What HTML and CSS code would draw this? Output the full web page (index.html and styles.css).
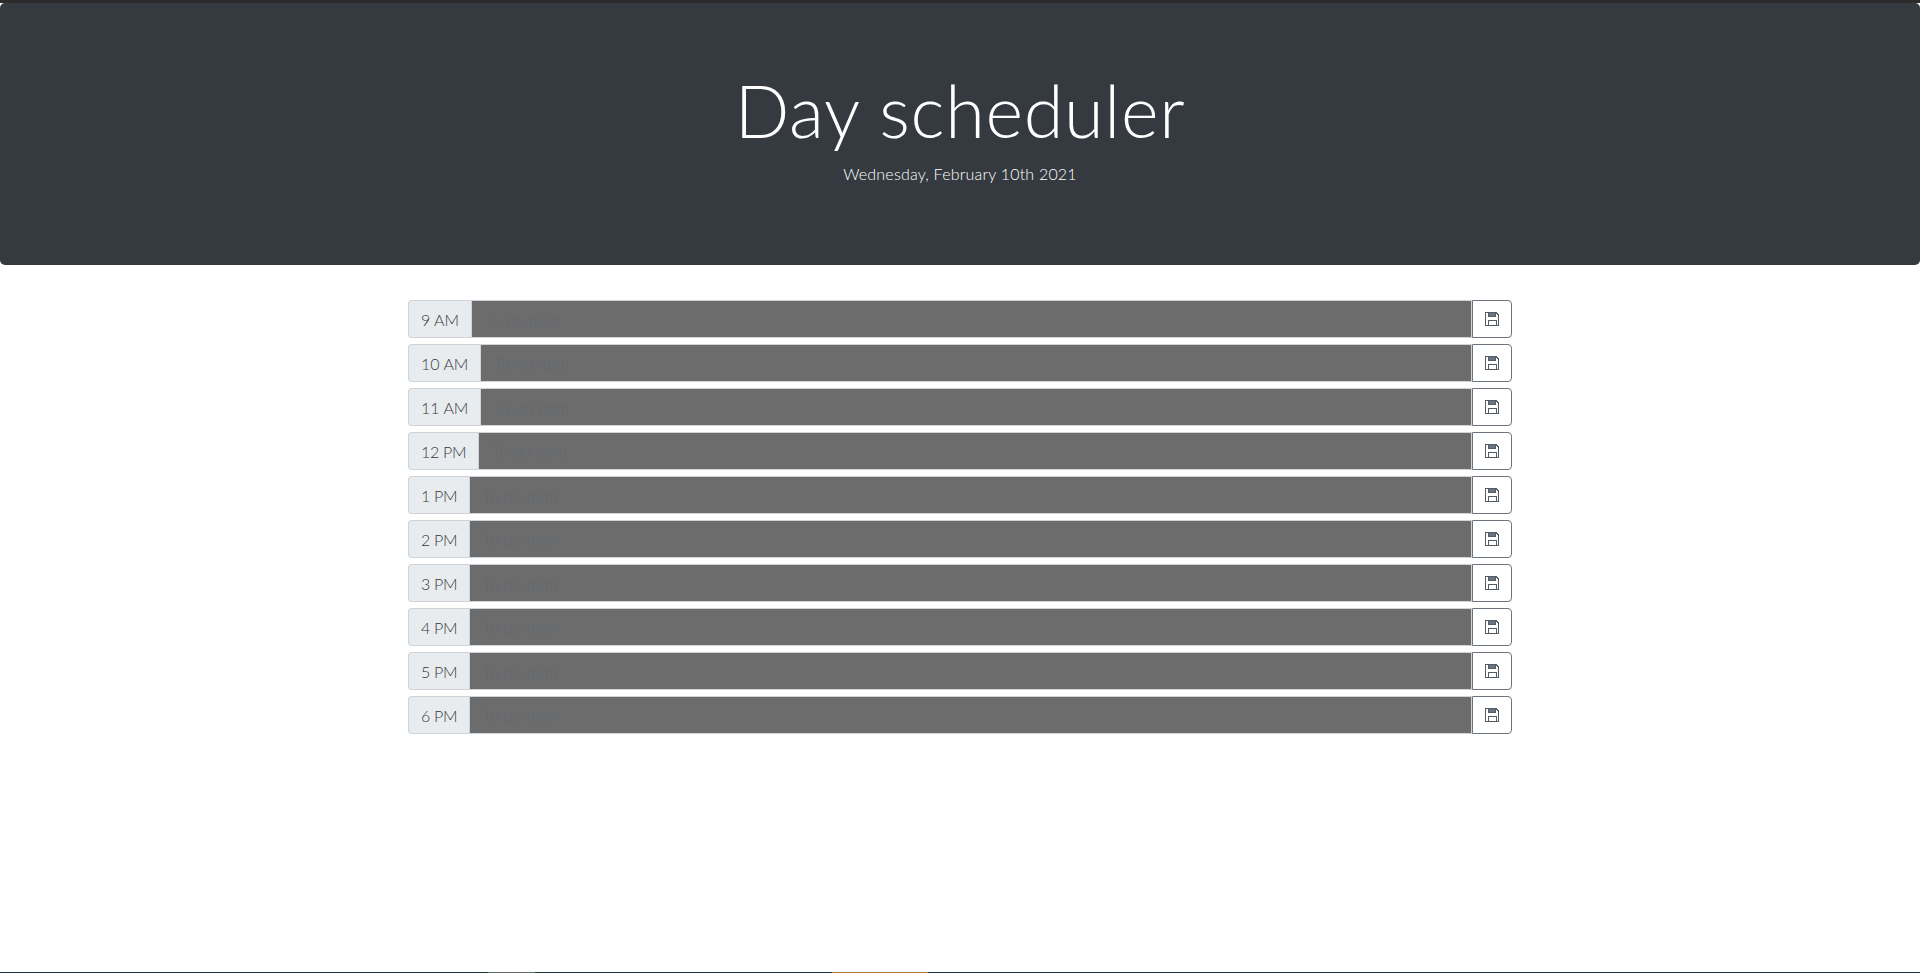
FILE: index.html
```html
<!DOCTYPE html>
<html>
<head>
    <title>Day scheduler</title>
    <link rel="stylesheet" href="styles.css">
</head>
<body>
    <div class="top-strip"></div>
    <header class="jumbotron">
        <h1 class="display">Day scheduler</h1>
        <p class="lead">Wednesday, February 10th 2021</p>
    </header>

    <div class="container">
        <div class="input-group">
            <span class="hour">9 AM</span>
            <input class="task" type="text" placeholder="To do item">
            <button class="save"><svg viewBox="0 0 14 14"><path d="M.5 .5h10.5l2.5 2.5v10.5h-13z"/><path class="slot" d="M3.5 .5v3.5h6.5v-3.5"/><path d="M3 13.5v-5.5h8v5.5"/></svg></button>
        </div>
        <div class="input-group">
            <span class="hour">10 AM</span>
            <input class="task" type="text" placeholder="To do item">
            <button class="save"><svg viewBox="0 0 14 14"><path d="M.5 .5h10.5l2.5 2.5v10.5h-13z"/><path class="slot" d="M3.5 .5v3.5h6.5v-3.5"/><path d="M3 13.5v-5.5h8v5.5"/></svg></button>
        </div>
        <div class="input-group">
            <span class="hour">11 AM</span>
            <input class="task" type="text" placeholder="To do item">
            <button class="save"><svg viewBox="0 0 14 14"><path d="M.5 .5h10.5l2.5 2.5v10.5h-13z"/><path class="slot" d="M3.5 .5v3.5h6.5v-3.5"/><path d="M3 13.5v-5.5h8v5.5"/></svg></button>
        </div>
        <div class="input-group">
            <span class="hour hour-pm">12 PM</span>
            <input class="task" type="text" placeholder="To do item">
            <button class="save"><svg viewBox="0 0 14 14"><path d="M.5 .5h10.5l2.5 2.5v10.5h-13z"/><path class="slot" d="M3.5 .5v3.5h6.5v-3.5"/><path d="M3 13.5v-5.5h8v5.5"/></svg></button>
        </div>
        <div class="input-group">
            <span class="hour hour-pm">1 PM</span>
            <input class="task" type="text" placeholder="To do item">
            <button class="save"><svg viewBox="0 0 14 14"><path d="M.5 .5h10.5l2.5 2.5v10.5h-13z"/><path class="slot" d="M3.5 .5v3.5h6.5v-3.5"/><path d="M3 13.5v-5.5h8v5.5"/></svg></button>
        </div>
        <div class="input-group">
            <span class="hour hour-pm">2 PM</span>
            <input class="task" type="text" placeholder="To do item">
            <button class="save"><svg viewBox="0 0 14 14"><path d="M.5 .5h10.5l2.5 2.5v10.5h-13z"/><path class="slot" d="M3.5 .5v3.5h6.5v-3.5"/><path d="M3 13.5v-5.5h8v5.5"/></svg></button>
        </div>
        <div class="input-group">
            <span class="hour hour-pm">3 PM</span>
            <input class="task" type="text" placeholder="To do item">
            <button class="save"><svg viewBox="0 0 14 14"><path d="M.5 .5h10.5l2.5 2.5v10.5h-13z"/><path class="slot" d="M3.5 .5v3.5h6.5v-3.5"/><path d="M3 13.5v-5.5h8v5.5"/></svg></button>
        </div>
        <div class="input-group">
            <span class="hour hour-pm">4 PM</span>
            <input class="task" type="text" placeholder="To do item">
            <button class="save"><svg viewBox="0 0 14 14"><path d="M.5 .5h10.5l2.5 2.5v10.5h-13z"/><path class="slot" d="M3.5 .5v3.5h6.5v-3.5"/><path d="M3 13.5v-5.5h8v5.5"/></svg></button>
        </div>
        <div class="input-group">
            <span class="hour hour-pm">5 PM</span>
            <input class="task" type="text" placeholder="To do item">
            <button class="save"><svg viewBox="0 0 14 14"><path d="M.5 .5h10.5l2.5 2.5v10.5h-13z"/><path class="slot" d="M3.5 .5v3.5h6.5v-3.5"/><path d="M3 13.5v-5.5h8v5.5"/></svg></button>
        </div>
        <div class="input-group">
            <span class="hour hour-pm">6 PM</span>
            <input class="task" type="text" placeholder="To do item">
            <button class="save"><svg viewBox="0 0 14 14"><path d="M.5 .5h10.5l2.5 2.5v10.5h-13z"/><path class="slot" d="M3.5 .5v3.5h6.5v-3.5"/><path d="M3 13.5v-5.5h8v5.5"/></svg></button>
        </div>
    </div>

    <div class="bottom-strip">
        <span class="seg-grey"></span>
        <span class="seg-orange"></span>
    </div>
</body>
</html>
```

FILE: styles.css
```css
html, body {
    height: 100%;
}
body {
    margin: 0;
    display: flex;
    flex-direction: column;
    overflow: hidden;
    font-family: Lato, "Open Sans", sans-serif;
    font-weight: 300;
    background-color: #fff;
    color: #495057;
}
.top-strip {
    height: 3px;
    background-color: #2b2b2b;
}
.jumbotron {
    height: 262px;
    box-sizing: border-box;
    padding-top: 64px;
    background-color: #343a40;
    border-radius: 5px;
    color: #fff;
    text-align: center;
}
.display {
    margin: 0 0 9px 0;
    font-size: 72px;
    font-weight: 300;
    line-height: 1.2;
    letter-spacing: 0.7px;
}
.lead {
    margin: 0;
    font-size: 16px;
    font-weight: 300;
    line-height: 1.5;
    letter-spacing: 0.2px;
}
.container {
    width: 1104px;
    margin: 35px auto 0 auto;
    display: flex;
    flex-direction: column;
    gap: 6px;
}
.input-group {
    display: flex;
    height: 38px;
}
.hour {
    display: flex;
    align-items: center;
    padding: 0 12px;
    background-color: #e9ecef;
    border: 1px solid #ced4da;
    border-right: none;
    border-radius: 4px 0 0 4px;
    font-size: 16px;
    color: #343a40;
}
.hour-pm {
    letter-spacing: -0.3px;
}
.task {
    flex: 1;
    min-width: 0;
    box-sizing: border-box;
    padding: 6px 12px;
    background-color: #6c6c6c;
    border: 1px solid #ced4da;
    font-family: inherit;
    font-size: 16px;
    font-weight: 300;
}
.task::placeholder {
    color: #5f6973;
    letter-spacing: 0.3px;
}
.save {
    width: 40px;
    display: flex;
    align-items: center;
    justify-content: center;
    padding: 0;
    background-color: #fff;
    border: 1px solid #6c757d;
    border-radius: 0 4px 4px 0;
}
.save svg {
    width: 14px;
    height: 14px;
    fill: none;
    stroke: #555c63;
    stroke-width: 1;
    shape-rendering: crispEdges;
}
.save .slot {
    fill: #6c757d;
}
.bottom-strip {
    margin-top: auto;
    height: 1px;
    display: flex;
    background-color: #1f2d36;
}
.seg-grey {
    width: 47px;
    margin-left: 488px;
    background-color: #5f6b70;
}
.seg-orange {
    width: 96px;
    margin-left: 297px;
    background-color: #b07a35;
}
```
